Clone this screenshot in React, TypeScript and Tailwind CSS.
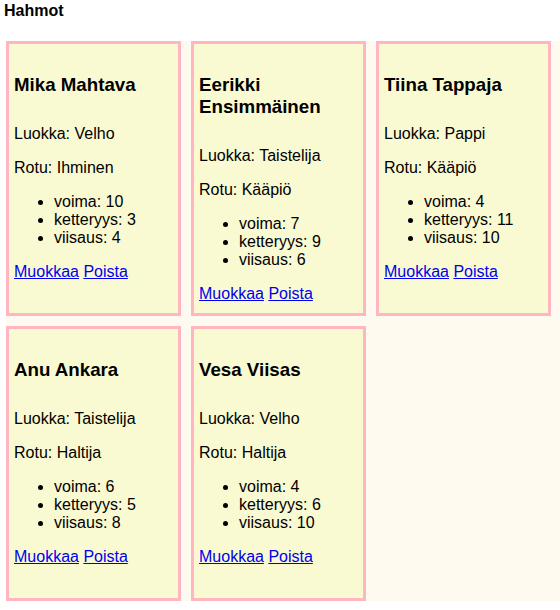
import React from "react";

type Hahmo = {
  nimi: string;
  luokka: string;
  rotu: string;
  voima: number;
  ketteryys: number;
  viisaus: number;
};

const hahmot: Hahmo[] = [
  { nimi: "Mika Mahtava", luokka: "Velho", rotu: "Ihminen", voima: 10, ketteryys: 3, viisaus: 4 },
  { nimi: "Eerikki Ensimmäinen", luokka: "Taistelija", rotu: "Kääpiö", voima: 7, ketteryys: 9, viisaus: 6 },
  { nimi: "Tiina Tappaja", luokka: "Pappi", rotu: "Kääpiö", voima: 4, ketteryys: 11, viisaus: 10 },
  { nimi: "Anu Ankara", luokka: "Taistelija", rotu: "Haltija", voima: 6, ketteryys: 5, viisaus: 8 },
  { nimi: "Vesa Viisas", luokka: "Velho", rotu: "Haltija", voima: 4, ketteryys: 6, viisaus: 10 },
];

function Kortti({ h }: { h: Hahmo }) {
  return (
    <div className="box-border h-[275px] overflow-hidden border-[3px] border-[#ffb6c1] bg-[#fafad2] px-[5px]">
      <h3 className="mt-[30.6px] mb-[28.9px] text-[18.72px] font-bold leading-[normal]">{h.nimi}</h3>
      <p className="m-0">Luokka: {h.luokka}</p>
      <p className="mt-[16px]">Rotu: {h.rotu}</p>
      <ul className="mt-[16px] list-disc pl-[40px]">
        <li>voima: {h.voima}</li>
        <li>ketteryys: {h.ketteryys}</li>
        <li>viisaus: {h.viisaus}</li>
      </ul>
      <p className="mt-[16px]">
        <a href="#" className="text-[#0000ee] underline">Muokkaa</a>{" "}
        <a href="#" className="text-[#0000ee] underline">Poista</a>
      </p>
    </div>
  );
}

export default function App() {
  return (
    <div className="min-h-[610px] bg-white text-[16px] leading-[normal] text-black [font-family:'Liberation_Sans',Arial,sans-serif]">
      <h4 className="m-0 pt-[2px] pl-[4px] text-[16px] font-bold leading-[normal]">Hahmot</h4>
      <div className="mt-[20.6px] ml-[6px] grid grid-cols-[repeat(3,175px)] gap-[10px] bg-[#fefaf0]">
        {hahmot.map((h) => (
          <Kortti key={h.nimi} h={h} />
        ))}
      </div>
    </div>
  );
}
